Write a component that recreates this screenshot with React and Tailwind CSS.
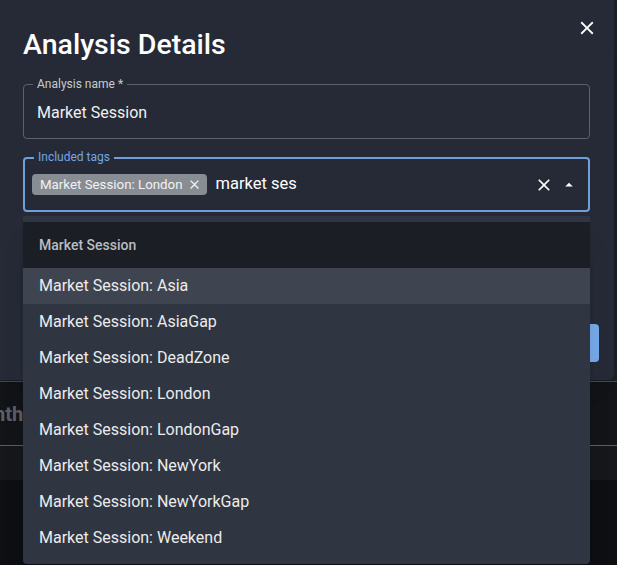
import React from 'react'

const options = ['Asia', 'AsiaGap', 'DeadZone', 'London', 'LondonGap', 'NewYork', 'NewYorkGap', 'Weekend']

function XIcon({className}) {
  return (
    <svg viewBox="0 0 24 24" className={className} fill="currentColor">
      <path d="M19 6.41 17.59 5 12 10.59 6.41 5 5 6.41 10.59 12 5 17.59 6.41 19 12 13.41 17.59 19 19 17.59 13.41 12z" />
    </svg>
  )
}

export default function App() {
  return (
    <div className="relative w-[617px] h-[565px] overflow-hidden bg-[#0e0f12] font-['Roboto',sans-serif]">
      {/* page behind the dialog */}
      <div className="h-[381px] bg-[#1c2029]" />
      <div className="h-[64px] border-t border-[#4a4d52] bg-[#131519] flex items-center">
        <span className="ml-[-6px] text-[20px] font-bold text-[#5f6369]">nth</span>
      </div>
      <div className="h-[35px] border-t border-[#5a5d62] bg-[#15171b]" />

      {/* dialog */}
      <div className="absolute left-[-10px] top-[-10px] w-[624px] h-[390px] rounded-[6px] bg-[#252a36] shadow-2xl">
        <button className="absolute right-[16px] top-[27px] text-white">
          <XIcon className="w-[22px] h-[22px]" />
        </button>
        <div className="pl-[33px] pr-[24px] pt-[37px]">
          <h2 className="text-[28.5px] font-medium leading-[36px] text-white">Analysis Details</h2>

          <div className="relative mt-[21px] h-[55px] rounded-[4px] border border-[#5b606a]">
            <span className="absolute left-[9px] top-[-9px] px-[4px] bg-[#252a36] text-[12px] leading-[16px] text-[#c9cbcf]">Analysis name *</span>
            <div className="px-[13px] pt-[16px] text-[16px] text-[#f0f0f0]">Market Session</div>
          </div>

          <div className="relative mt-[18px] h-[55px] rounded-[4px] border-2 border-[#6fa0dc] flex items-center pl-[7px] pr-[10px]">
            <span className="absolute left-[9px] top-[-10px] px-[4px] bg-[#252a36] text-[12px] leading-[16px] text-[#74a6e4]">Included tags</span>
            <span className="flex items-center gap-[4px] h-[21px] rounded-[4px] bg-[#888d94] pl-[8px] pr-[5px] text-[13.3px] text-[#f2f2f2]">
              Market Session: London
              <XIcon className="w-[15px] h-[15px]" />
            </span>
            <span className="ml-[9px] text-[16.5px] text-white">market ses</span>
            <span className="ml-auto flex items-center gap-[6px] text-white">
              <XIcon className="w-[20px] h-[20px]" />
              <svg viewBox="0 0 24 24" className="w-[18px] h-[18px]" fill="currentColor"><path d="m7 14 5-5 5 5z" /></svg>
            </span>
          </div>
        </div>
        <div className="absolute right-[15px] top-[334px] w-[80px] h-[38px] rounded-[4px] bg-[#76a9e9]" />
      </div>

      {/* autocomplete popup */}
      <div className="absolute left-[23px] top-[216px] w-[567px] rounded-b-[4px] bg-[#2f3541] pt-[6px] pb-[8px] shadow-xl">
        <div className="h-[46px] flex items-center px-[16px] bg-[#1b1e25] text-[14px] font-medium text-[#b9bcc1]">Market Session</div>
        {options.map((o, i) => (
          <div key={o} className={`h-[36px] flex items-center px-[16px] text-[16px] text-[#ececec] ${i === 0 ? 'bg-[#3f4550]' : ''}`}>
            Market Session: {o}
          </div>
        ))}
      </div>
    </div>
  )
}
